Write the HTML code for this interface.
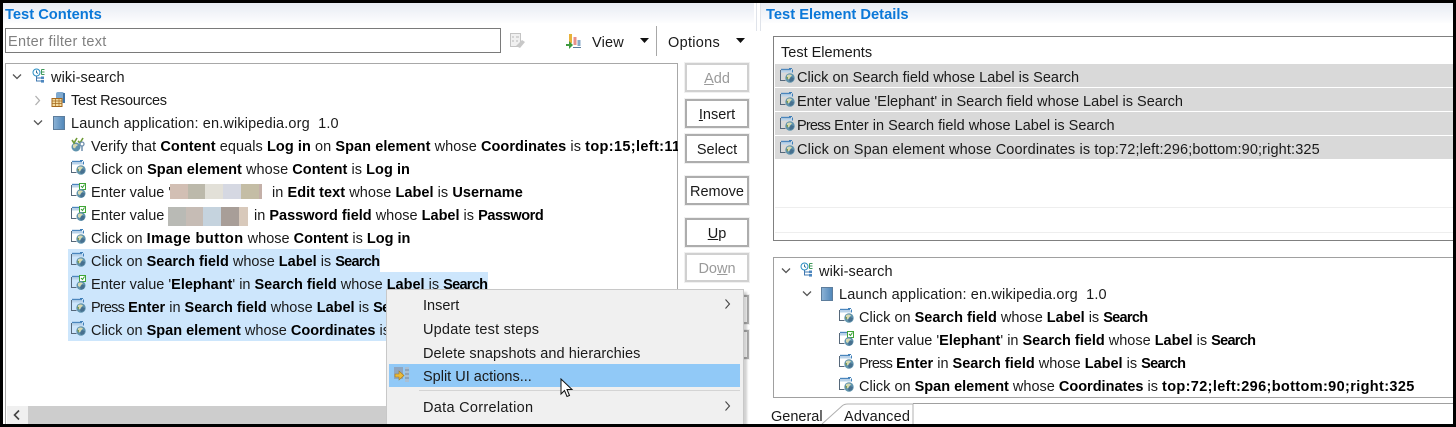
<!DOCTYPE html>
<html><head><meta charset="utf-8"><style>
html,body{margin:0;padding:0;background:#000;}
#p{position:relative;width:1456px;height:427px;overflow:hidden;background:#000;font:14.5px "Liberation Sans",sans-serif;color:#1a1a1a;}
#w{position:absolute;left:3px;top:3px;width:1450px;height:421px;background:#fff;overflow:hidden;}
#c{position:absolute;left:-3px;top:-3px;width:1456px;height:427px;}
.a{position:absolute;white-space:nowrap;}
.t{position:absolute;white-space:nowrap;line-height:20px;height:20px;margin-top:1px;}
.sel{position:absolute;background:#cde6fc;height:23px;}
.r{position:absolute;background:#d9d9d9;left:775px;width:678px;height:23px;}
.b{position:absolute;left:685px;width:60px;height:25px;border:2px solid #adadad;background:#fff;text-align:center;line-height:29px;box-shadow:0 0 0 1px #f0f0f0;}
.d{color:#9a9a9a;border-color:#d0d0d0;}
u{text-underline-offset:1px;}
b{color:#000;}
b.n{letter-spacing:-.7px;}
.pr{letter-spacing:-.8px;}
i{font-style:normal;font-weight:bold;color:#000;letter-spacing:.36px;}
svg.i{position:absolute;width:15px;height:15px;}
.hd{position:absolute;top:3px;height:20px;background:linear-gradient(#e7ebf3,#fdfdfe);}
.ti{position:absolute;top:5px;font-weight:bold;font-size:14.7px;color:#0b78d8;line-height:20px;}
.l{position:absolute;background:#a0a0a0;}
</style></head><body><div id="p"><div id="w"><div id="c">
<svg width="0" height="0" style="position:absolute"><defs>
<symbol id="s" viewBox="0 0 15 15"><path d="M.5 2v10.500h5" fill="none" stroke="#56687a"/><path d="M1 1.500h10" stroke="#4b86bd" fill="none" stroke-width="1.4"/><rect x="1" y="2.500" width="11" height="2" fill="#b9d3ea"/><path d="M12.500 1.500v3M9 .5h3" stroke="#3f7fb8" fill="none"/><circle cx="10" cy="10" r="4.700" fill="#5f93ad"/><path d="M7 7.500c2-1.500 4-1 5 0l-2 2-1 2-2-1z" fill="#d8d9b0"/><path d="M9 12l2-3 3 1-1 3-3 1z" fill="#47708f"/><path d="M6 9l2 0 0 3z" fill="#7c9a52"/></symbol>
<symbol id="e" viewBox="0 0 15 15"><path d="M.5 2v10.500h5" fill="none" stroke="#56687a"/><path d="M1 1.500h7" stroke="#4b86bd" fill="none" stroke-width="1.4"/><rect x="1" y="2.500" width="7" height="2" fill="#b9d3ea"/><rect x="8.500" y=".5" width="6" height="6" fill="#fff" stroke="#3fa535"/><path d="M10 3l1.500 1.500 2-3" stroke="#2f9a2a" fill="none"/><circle cx="10" cy="10.500" r="4.500" fill="#5f93ad"/><path d="M7 8.500c2-1.500 4-1 5 0l-2 1.500-1 2-2-1z" fill="#d8d9b0"/><path d="M9 12.500l2-3 3 1-1 3-3 1z" fill="#47708f"/></symbol>
<symbol id="v" viewBox="0 0 15 15"><circle cx="5" cy="10" r="4.500" fill="#5f93ad"/><path d="M2 8c2-1.500 4-1 5 0l-2 1.500-1 2-2-1z" fill="#d8d9b0"/><path d="M1 3l2 3 3-5M7 4l2 2 3-5" stroke="#6d9a35" stroke-width="1.6" fill="none"/><circle cx="11" cy="7" r="2" fill="none" stroke="#6f8fae" stroke-width="1.3"/><path d="M11 9v5" stroke="#6f8fae" stroke-width="1.5"/></symbol>
<symbol id="w1" viewBox="0 0 15 15"><circle cx="4.500" cy="4.500" r="3.500" fill="#fff" stroke="#2a8fc4"/><path d="M4.500 2.500v2l1.500 1" stroke="#2a6f9c" fill="none"/><path d="M4.500 8v5h5M4.500 10h5" stroke="#3f78b0" fill="none"/><rect x="9" y="8.500" width="3" height="2.600" fill="#4d87bf"/><rect x="9" y="12" width="3" height="2.600" fill="#4d87bf"/><path d="M9.500 1.500h3M9.500 4h3M9.500 6.500h3M9.500 1.500v5" stroke="#3f9a5a" fill="none"/></symbol>
<symbol id="la" viewBox="0 0 12 14"><defs><linearGradient id="lg" x1="0" x2="1" y1="0" y2="0"><stop offset="0" stop-color="#8db3d6"/><stop offset="1" stop-color="#4f86b8"/></linearGradient></defs><rect x=".5" y=".5" width="11" height="13" fill="url(#lg)" stroke="#5d7d9c"/></symbol>
</defs></svg>

<div class="hd" style="left:3px;width:751px"></div>
<div class="hd" style="left:761px;width:692px"></div>
<div class="l" style="left:756px;top:3px;width:1px;height:28px;background:#dfe3ea"></div>
<div class="l" style="left:760px;top:3px;width:1px;height:28px;background:#dfe3ea"></div>
<div class="ti" style="left:5px">Test Contents</div>
<div class="ti" style="left:766px">Test Element Details</div>

<div class="a" style="left:5px;top:28px;width:492px;height:23px;border:1px solid #7a7a7a;line-height:26px;color:#808080;padding-left:2px;letter-spacing:.3px">Enter filter text</div>
<svg class="a" style="left:510px;top:33px" width="16" height="16" viewBox="0 0 16 16"><rect x=".5" y=".5" width="10" height="13" fill="#f0f0f0" stroke="#c4c4c4"/><path d="M2 4h2M6 4h3M2 8h2M6 8h2" stroke="#b8b8b8"/><path d="M6 13l6-6 3 2-5 6z" fill="#c8c8c8"/></svg>
<svg class="a" style="left:566px;top:33px" width="15" height="16" viewBox="0 0 15 16"><rect x="3" y="1" width="3" height="9" fill="#e8b23a"/><rect x="7.500" y="4" width="3" height="8" fill="#e8908a"/><rect x="11.500" y="7" width="3" height="6" fill="#8aa8c8"/><path d="M0 11h3V8l4 4-4 4v-3H0z" fill="#3f9a3f"/><path d="M7 14.500h8" stroke="#5a7a9a"/></svg>
<div class="t" style="left:592px;top:32px;letter-spacing:.2px">View</div>
<svg class="a" style="left:640px;top:38px" width="10" height="6"><path d="M0 0h9L4.500 5z" fill="#111"/></svg>
<div class="l" style="left:656px;top:26px;width:1px;height:30px;background:#a8a8a8"></div>
<div class="t" style="left:668px;top:32px;letter-spacing:.3px">Options</div>
<svg class="a" style="left:736px;top:38px" width="10" height="6"><path d="M0 0h9L4.500 5z" fill="#111"/></svg>

<!-- left tree box -->
<div class="a" style="left:5px;top:63px;width:671px;height:361px;border:1px solid #a8a8a8;border-bottom:0;background:#fff"></div>
<div class="sel" style="left:68px;top:249px;width:312px"></div>
<div class="sel" style="left:68px;top:272px;width:420px"></div>
<div class="sel" style="left:68px;top:295px;width:330px"></div>
<div class="sel" style="left:68px;top:318px;width:330px"></div>
<div class="a" style="left:7px;top:406px;width:671px;height:18px;background:#cdcdcd"></div>
<div class="a" style="left:7px;top:406px;width:21px;height:18px;background:#f0f0f0"></div>
<svg class="a" style="left:12px;top:409px" width="10" height="12"><path d="M7 1.500L2.500 6 7 10.500" stroke="#444" stroke-width="1.6" fill="none"/></svg>

<svg class="a" style="left:12px;top:73px" width="10" height="8"><path d="M1 1.500l4 4 4-4" stroke="#555" stroke-width="1.3" fill="none"/></svg>
<svg class="i" style="left:32px;top:68px"><use href="#w1"/></svg>
<div class="t" style="left:51px;top:67px;letter-spacing:.1px">wiki-search</div>
<svg class="a" style="left:34px;top:95px" width="8" height="11"><path d="M1.500 1l4 4.500-4 4.500" stroke="#b0b0b0" stroke-width="1.3" fill="none"/></svg>
<svg class="a" style="left:51px;top:92px" width="15" height="15" viewBox="0 0 15 15"><rect x="5" y="0" width="8" height="11" rx="2" fill="#7fa9cf"/><rect x="12" y="1" width="2" height="10" fill="#3f74a6"/><rect x="1" y="6.500" width="10" height="8" fill="#f2dca0" stroke="#a5671c"/><path d="M1 9h10M1 11.500h10M4.500 7v7M8 7v7" stroke="#a5671c" stroke-width=".7"/></svg>
<div class="t" style="left:71px;top:90px;letter-spacing:-.3px">Test Resources</div>
<svg class="a" style="left:33px;top:119px" width="10" height="8"><path d="M1 1.500l4 4 4-4" stroke="#555" stroke-width="1.300" fill="none"/></svg>
<svg class="a" style="left:53px;top:116px" width="12" height="14"><use href="#la"/></svg>
<div class="t" style="left:71px;top:113px;letter-spacing:.14px">Launch application: en.wikipedia.org&nbsp; 1.0</div>

<svg class="i" style="left:71px;top:137px"><use href="#v"/></svg>
<div class="t" style="left:91px;top:136px;width:587px;overflow:hidden;letter-spacing:.07px">Verify that <b>Content</b> equals <b>Log in</b> on <b>Span element</b> whose <b>Coordinates</b> is <i>top:15;left:1130;bottom:33;right:1178</i></div>
<svg class="i" style="left:71px;top:160px"><use href="#s"/></svg>
<div class="t" style="left:91px;top:159px;letter-spacing:.05px">Click on <b>Span element</b> whose <b>Content</b> is <b>Log in</b></div>
<svg class="i" style="left:71px;top:183px"><use href="#e"/></svg>
<div class="t" style="left:91px;top:182px">Enter value '</div>
<div class="t" style="left:272px;top:182px;letter-spacing:.05px">in <b>Edit text</b> whose <b>Label</b> is <b>Username</b></div>
<div class="a" style="left:170px;top:184px;width:18px;height:15px;background:#d2bfb4"></div><div class="a" style="left:188px;top:184px;width:17px;height:15px;background:#bcb9ab"></div><div class="a" style="left:205px;top:184px;width:18px;height:15px;background:#e2e0d8"></div><div class="a" style="left:223px;top:184px;width:18px;height:15px;background:#d5d8e2"></div><div class="a" style="left:241px;top:184px;width:18px;height:15px;background:#c4bda5"></div><div class="a" style="left:259px;top:184px;width:3px;height:15px;background:#c4b0a8"></div>
<svg class="i" style="left:71px;top:206px"><use href="#e"/></svg>
<div class="t" style="left:91px;top:205px">Enter value</div>
<div class="t" style="left:254px;top:205px">in <b>Password field</b> whose <b>Label</b> is <b class="n" style="letter-spacing:-.4px">Password</b></div>
<div class="a" style="left:168px;top:207px;width:18px;height:19px;background:#b9bab5"></div><div class="a" style="left:186px;top:207px;width:17px;height:19px;background:#c6bcb5"></div><div class="a" style="left:203px;top:207px;width:18px;height:19px;background:#c5d3de"></div><div class="a" style="left:221px;top:207px;width:18px;height:19px;background:#a89e98"></div><div class="a" style="left:239px;top:207px;width:9px;height:19px;background:#d8c9bb"></div>
<svg class="i" style="left:71px;top:229px"><use href="#s"/></svg>
<div class="t" style="left:91px;top:228px">Click on <b style="letter-spacing:.5px">Image button</b> whose <b>Content</b> is <b>Log in</b></div>
<svg class="i" style="left:71px;top:252px"><use href="#s"/></svg>
<div class="t" style="left:91px;top:251px">Click on <b>Search field</b> whose <b>Label</b> is <b class="n">Search</b></div>
<svg class="i" style="left:71px;top:275px"><use href="#e"/></svg>
<div class="t" style="left:91px;top:274px">Enter value '<b>Elephant</b>' in <b>Search field</b> whose <b>Label</b> is <b class="n">Search</b></div>
<svg class="i" style="left:71px;top:298px"><use href="#s"/></svg>
<div class="t" style="left:91px;top:297px"><span class="pr">Press</span> <b>Enter</b> in <b>Search field</b> whose <b>Label</b> is <b class="n">Search</b></div>
<svg class="i" style="left:71px;top:321px"><use href="#s"/></svg>
<div class="t" style="left:91px;top:320px">Click on <b>Span element</b> whose <b>Coordinates</b> is <i>top:72;left:296</i></div>

<!-- buttons -->
<div class="b d" style="top:63px"><u>A</u>dd</div>
<div class="b" style="top:99px"><u>I</u>nsert</div>
<div class="b" style="top:134px">Select</div>
<div class="b" style="top:176px">Remove</div>
<div class="b" style="top:218px"><u>U</u>p</div>
<div class="b d" style="top:253px">Do<u>w</u>n</div>
<div class="b" style="top:295px"></div>
<div class="b" style="top:330px"></div>

<!-- right -->
<div class="a" style="left:773px;top:36px;width:680px;height:205px;border:1px solid #808080;border-width:1px 0 1px 1px;background:#fff;box-sizing:border-box"></div>
<div class="t" style="left:781px;top:42px">Test Elements</div>
<div class="r" style="top:64px"></div><div class="r" style="top:88px"></div><div class="r" style="top:112px"></div><div class="r" style="top:136px"></div>
<div class="l" style="left:775px;top:207px;width:678px;height:1px;background:#eee"></div>
<div class="l" style="left:775px;top:232px;width:678px;height:1px;background:#eee"></div>
<svg class="i" style="left:780px;top:68px"><use href="#s"/></svg><div class="t" style="left:797px;top:67px">Click on Search field whose Label is Search</div>
<svg class="i" style="left:780px;top:92px"><use href="#s"/></svg><div class="t" style="left:797px;top:91px">Enter value 'Elephant' in Search field whose Label is Search</div>
<svg class="i" style="left:780px;top:116px"><use href="#s"/></svg><div class="t" style="left:797px;top:115px"><span class="pr">Press</span> Enter in Search field whose Label is Search</div>
<svg class="i" style="left:780px;top:140px"><use href="#s"/></svg><div class="t" style="left:797px;top:139px;letter-spacing:.13px">Click on Span element whose Coordinates is top:72;left:296;bottom:90;right:325</div>

<div class="a" style="left:773px;top:257px;width:680px;height:141px;border:1px solid #a0a0a0;border-width:1px 0 1px 1px;box-sizing:border-box"></div>
<svg class="a" style="left:781px;top:267px" width="10" height="8"><path d="M1 1.500l4 4 4-4" stroke="#555" stroke-width="1.300" fill="none"/></svg>
<svg class="i" style="left:800px;top:262px"><use href="#w1"/></svg>
<div class="t" style="left:819px;top:261px;letter-spacing:.1px">wiki-search</div>
<svg class="a" style="left:802px;top:290px" width="10" height="8"><path d="M1 1.500l4 4 4-4" stroke="#555" stroke-width="1.300" fill="none"/></svg>
<svg class="a" style="left:821px;top:287px" width="12" height="14"><use href="#la"/></svg>
<div class="t" style="left:839px;top:284px;letter-spacing:.14px">Launch application: en.wikipedia.org&nbsp; 1.0</div>
<svg class="i" style="left:839px;top:308px"><use href="#s"/></svg>
<div class="t" style="left:859px;top:307px">Click on <b>Search field</b> whose <b>Label</b> is <b class="n">Search</b></div>
<svg class="i" style="left:839px;top:331px"><use href="#e"/></svg>
<div class="t" style="left:859px;top:330px">Enter value '<b>Elephant</b>' in <b>Search field</b> whose <b>Label</b> is <b class="n">Search</b></div>
<svg class="i" style="left:839px;top:354px"><use href="#s"/></svg>
<div class="t" style="left:859px;top:353px"><span class="pr">Press</span> <b>Enter</b> in <b>Search field</b> whose <b>Label</b> is <b class="n">Search</b></div>
<svg class="i" style="left:839px;top:377px"><use href="#s"/></svg>
<div class="t" style="left:859px;top:376px">Click on <b>Span element</b> whose <b>Coordinates</b> is <i>top:72;left:296;bottom:90;right:325</i></div>

<!-- tabs -->
<div class="t" style="left:771px;top:406px">General</div>
<div class="t" style="left:844px;top:406px;letter-spacing:.2px">Advanced</div>
<svg class="a" style="left:820px;top:402px" width="100" height="22"><path d="M2 22L22 4Q24 2 28 2H93V22" stroke="#b0b0b0" fill="none"/></svg>
<div class="l" style="left:913px;top:403px;width:540px;height:1px"></div>

<!-- menu -->
<div class="a" style="left:386px;top:289px;width:356px;height:136px;background:#f0f0f0;border:1px solid #c8c8c8;box-shadow:3px 3px 2px rgba(0,0,0,.18)"></div>
<div class="a" style="left:389px;top:364px;width:351px;height:23px;background:#91c9f7"></div>
<div class="l" style="left:419px;top:390px;width:321px;height:1px;background:#d4d4d4"></div>
<div class="t" style="left:423px;top:295px">Insert</div>
<div class="t" style="left:423px;top:319px;letter-spacing:.2px">Update test steps</div>
<div class="t" style="left:423px;top:343px;letter-spacing:.07px">Delete snapshots and hierarchies</div>
<div class="t" style="left:423px;top:366px">Split UI actions...</div>
<div class="t" style="left:423px;top:397px;letter-spacing:.3px">Data Correlation</div>
<svg class="a" style="left:724px;top:298px" width="8" height="12"><path d="M1.500 1.500l4 4.500-4 4.500" stroke="#444" stroke-width="1.100" fill="none"/></svg>
<svg class="a" style="left:724px;top:400px" width="8" height="12"><path d="M1.500 1.500l4 4.500-4 4.500" stroke="#444" stroke-width="1.100" fill="none"/></svg>
<svg class="a" style="left:394px;top:367px" width="15" height="15" viewBox="0 0 15 15"><rect x="0" y="0" width="9" height="12" fill="#8fa6c0"/><rect x="11" y="0" width="4" height="15" fill="#a9bfd3"/><path d="M11 3h4M11 7h4M11 11h4" stroke="#6f8aa5"/><path d="M1 7h4V4l5 4.500-5 4.500v-3H1z" fill="#eab93a" stroke="#a47a1a" stroke-width=".6"/></svg>
<svg class="a" style="left:560px;top:378px" width="14" height="20" viewBox="0 0 14 20"><path d="M1 1v15l3.500-3.500 2.500 6 2.500-1-2.500-6h5z" fill="#fff" stroke="#111" stroke-width="1"/></svg>
</div></div></div></body></html>
